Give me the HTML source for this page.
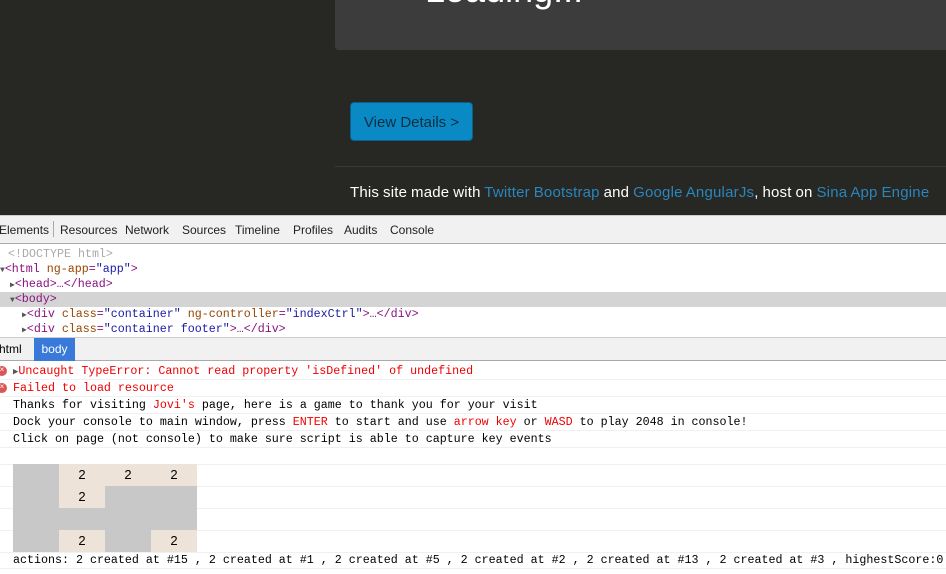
<!DOCTYPE html>
<html><head><style>
*{margin:0;padding:0;box-sizing:border-box}
body{width:946px;height:574px;overflow:hidden;background:#fff;position:relative;font-family:"Liberation Sans",sans-serif}
.top{position:absolute;left:0;top:0;width:946px;height:215px;background:#272723}
.panel{position:absolute;left:335px;top:0;width:611px;height:50px;background:#3c3c3c;border-radius:0 0 0 4px}
.load{position:absolute;left:425px;top:-31px;font-size:36px;color:#fff}
.btn{position:absolute;left:350px;top:102px;width:123px;height:39px;background:#0a8ac4;border-radius:4px;color:#0c2e45;font-size:15px;line-height:39px;text-align:center;border:1px solid #0b5f8a}
.hr{position:absolute;left:335px;top:166px;width:611px;height:1px;background:#3a3a36}
.foot{position:absolute;left:350px;top:184px;font-size:15px;letter-spacing:0.2px;word-spacing:-0.5px;color:#fff;white-space:nowrap}
.foot span{color:#2a86bd}
.tabs{position:absolute;left:0;top:215px;width:946px;height:29px;background:#f1f1f1;border-top:1px solid #ccc;border-bottom:1px solid #aaa;font-size:12px;color:#222}
.tabs span{position:absolute;top:7px}
.mono{font-family:"Liberation Mono",monospace;font-size:11.67px}
.el{position:absolute;left:0;top:244px;width:946px;height:93px}
.el div{position:absolute;height:15px;line-height:15px;white-space:nowrap;color:#881280}
.at{color:#994500}.av{color:#1a1aa6}
.crumb{position:absolute;left:0;top:337px;width:946px;height:24px;background:#f1f1f1;border-top:1px solid #ccc;border-bottom:1px solid #aaa;font-size:12px}
.con{position:absolute;left:0;top:362px;width:946px;height:212px}
.row{position:absolute;left:0;width:946px;border-bottom:1px solid #f0f0f0;white-space:nowrap;line-height:17px;height:17px}
.row .t{position:absolute;left:13px}
.red{color:#e00}
.err{position:absolute;left:-3px;top:3px;width:10px;height:10px;border-radius:50%;background:#d55;color:#fff;font-size:8px;line-height:10px;text-align:center}
.c{position:absolute;width:46px;height:22px;text-align:center;line-height:22px;color:#000;font-family:"Liberation Sans",sans-serif;font-size:13px}
.g{background:#c8c8c8}.b{background:#ede3d9}
</style></head><body>
<div class="top">
<div class="panel"></div>
<div class="load">Loading...</div>
<div class="btn">View Details &gt;</div>
<div class="hr"></div>
<div class="foot">This site made with <span>Twitter Bootstrap</span> and <span>Google AngularJs</span>, host on <span>Sina App Engine</span></div>
</div>
<div class="tabs">
<span style="left:-1px">Elements</span><span style="left:53px;top:5px;height:16px;width:1px;background:#aaa"></span>
<span style="left:60px">Resources</span><span style="left:125px">Network</span><span style="left:182px">Sources</span><span style="left:235px">Timeline</span><span style="left:293px">Profiles</span><span style="left:344px">Audits</span><span style="left:390px">Console</span>
</div>
<div class="el mono">
<div style="left:8px;top:3px;color:#aaa">&lt;!DOCTYPE html&gt;</div>
<div style="left:0;top:18px"><span style="color:#555;font-size:8px">▼</span>&lt;html <span class="at">ng-app</span>=<span class="av">"app"</span>&gt;</div>
<div style="left:10px;top:33px"><span style="color:#555;font-size:8px">▶</span>&lt;head&gt;…&lt;/head&gt;</div>
<div style="left:0;top:48px;width:946px;background:#d4d4d4;padding-left:10px"><span style="color:#555;font-size:8px">▼</span>&lt;body&gt;</div>
<div style="left:22px;top:63px"><span style="color:#555;font-size:8px">▶</span>&lt;div <span class="at">class</span>=<span class="av">"container"</span> <span class="at">ng-controller</span>=<span class="av">"indexCtrl"</span>&gt;…&lt;/div&gt;</div>
<div style="left:22px;top:78px"><span style="color:#555;font-size:8px">▶</span>&lt;div <span class="at">class</span>=<span class="av">"container footer"</span>&gt;…&lt;/div&gt;</div>
</div>
<div class="crumb"><span style="position:absolute;left:-1px;top:4px">html</span><span style="position:absolute;left:34px;top:0;height:23px;width:41px;background:#3879d9;color:#fff;text-align:center;line-height:23px">body</span></div>
<div class="con mono">
<div class="row" style="top:1px"><span class="err">×</span><span class="t red"><span style="color:#555;font-size:9px">▶</span>Uncaught TypeError: Cannot read property 'isDefined' of undefined</span></div>
<div class="row" style="top:18px"><span class="err">×</span><span class="t red">Failed to load resource</span></div>
<div class="row" style="top:35px"><span class="t">Thanks for visiting <span class="red">Jovi's</span> page, here is a game to thank you for your visit</span></div>
<div class="row" style="top:52px"><span class="t">Dock your console to main window, press <span class="red">ENTER</span> to start and use <span class="red">arrow key</span> or <span class="red">WASD</span> to play 2048 in console!</span></div>
<div class="row" style="top:69px"><span class="t">Click on page (not console) to make sure script is able to capture key events</span></div>
<div class="row" style="top:86px"></div>
<div class="row" style="top:103px;height:22px"></div>
<div class="row" style="top:125px;height:22px"></div>
<div class="row" style="top:147px;height:22px"></div>
<div class="row" style="top:169px;height:22px"></div>
<div class="c g" style="left:13px;top:102px"></div><div class="c b" style="left:59px;top:102px">2</div><div class="c b" style="left:105px;top:102px">2</div><div class="c b" style="left:151px;top:102px">2</div>
<div class="c g" style="left:13px;top:124px"></div><div class="c b" style="left:59px;top:124px">2</div><div class="c g" style="left:105px;top:124px"></div><div class="c g" style="left:151px;top:124px"></div>
<div class="c g" style="left:13px;top:146px"></div><div class="c g" style="left:59px;top:146px"></div><div class="c g" style="left:105px;top:146px"></div><div class="c g" style="left:151px;top:146px"></div>
<div class="c g" style="left:13px;top:168px"></div><div class="c b" style="left:59px;top:168px">2</div><div class="c g" style="left:105px;top:168px"></div><div class="c b" style="left:151px;top:168px">2</div>
<div class="row" style="top:190px"><span class="t">actions: 2 created at #15 , 2 created at #1 , 2 created at #5 , 2 created at #2 , 2 created at #13 , 2 created at #3 , highestScore:0</span></div>
</div>
</body></html>
